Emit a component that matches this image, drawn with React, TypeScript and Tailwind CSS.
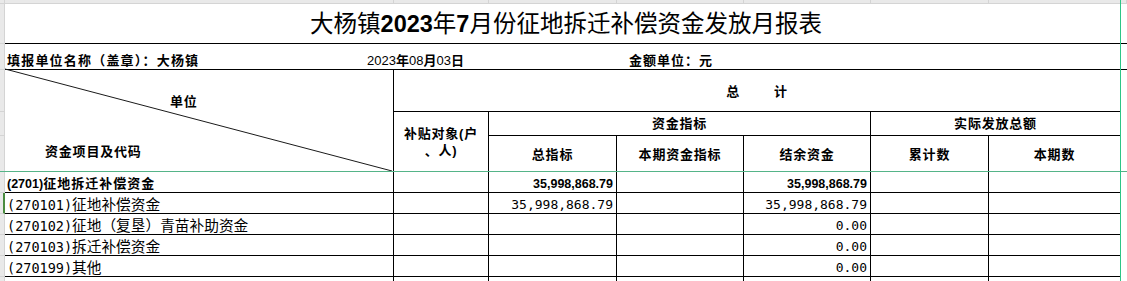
import React from "react";

const SANS = "font-['Liberation_Sans','Noto_Sans_CJK_SC',sans-serif]";
const MONO = "font-['DejaVu_Sans_Mono','Noto_Sans_CJK_SC',monospace]";
const CJK = "font-['Noto_Sans_CJK_SC',sans-serif]";
const BOLD = `${SANS} font-bold text-[13px] tracking-[0.8px] text-black`;
const HEAD = `${BOLD} leading-none`;

const STRIP = "bg-[#e9e9e9] border-r border-b border-[#d4d4d4]";
const CELL = "border-r border-b border-black";

const ROW = ["row-start-7", "row-start-8", "row-start-9", "row-start-10", "row-start-11", "row-start-12"];
const STRIP_COLS = ["col-start-1", "col-start-2", "col-start-3", "col-start-4", "col-start-5", "col-start-6", "col-start-7", "col-start-8", "col-start-9"];
const LEFT_ROWS = ["row-start-2", "row-start-3", "row-start-4", "row-start-5", "row-start-6"];

const rows = [
  { code: "(2701)", name: "征地拆迁补偿资金", total: "35,998,868.79", balance: "35,998,868.79", bold: true },
  { code: "(270101)", name: "征地补偿资金", total: "35,998,868.79", balance: "35,998,868.79" },
  { code: "(270102)", name: "征地（复垦）青苗补助资金", total: "", balance: "0.00" },
  { code: "(270103)", name: "拆迁补偿资金", total: "", balance: "0.00" },
  { code: "(270199)", name: "其他", total: "", balance: "0.00" },
  { code: "", name: "", total: "", balance: "" },
];

function Label({ code, name, bold }: { code: string; name: string; bold?: boolean }) {
  if (bold) {
    return (
      <span className="leading-none">
        <span className={`${SANS} font-bold text-[12.5px]`}>{code}</span>
        <span className={`${CJK} font-bold text-[13px] tracking-[1px]`}>{name}</span>
      </span>
    );
  }
  return (
    <span className="leading-none">
      <span className={`${MONO} text-[13.5px]`}>{code}</span>
      <span className={`${CJK} text-[14.7px]`}>{name}</span>
    </span>
  );
}

function Amount({ value, bold }: { value: string; bold?: boolean }) {
  if (!value) return null;
  return bold ? (
    <span className={`${SANS} font-bold text-[12.5px] leading-none`}>{value}</span>
  ) : (
    <span className={`${MONO} text-[13px] leading-none`}>{value}</span>
  );
}

export default function App() {
  return (
    <div className="relative w-[1127px] h-[281px] overflow-hidden bg-white text-black">
      <div className="grid grid-cols-[5px_389px_95px_128px_127px_127px_118px_132px_6px] grid-rows-[4px_40px_26px_42px_24px_36px_21px_21px_21px_21px_21px_21px]">
        {/* column header strip */}
        {STRIP_COLS.map((c) => (
          <div key={c} className={`${c} row-start-1 ${STRIP}`} />
        ))}
        {/* row header strip */}
        {LEFT_ROWS.map((r) => (
          <div key={r} className={`col-start-1 ${r} ${STRIP}`} />
        ))}

        {/* title */}
        <div className="col-start-2 col-span-8 row-start-2 border-b border-black flex items-center justify-center">
          <span className={`${CJK} text-[23.5px] leading-none`}>
            大杨镇<span className={`${SANS} font-bold`}>2023</span>年<span className={`${SANS} font-bold`}>7</span>月份征地拆迁补偿资金发放月报表
          </span>
        </div>

        {/* unit / date line */}
        <div className="col-start-2 col-span-8 row-start-3 border-b border-black flex items-end pl-[2px] pb-[2px]">
          <span className={`${HEAD} w-[360px] tracking-[1.2px]`}>填报单位名称（盖章）：大杨镇</span>
          <span className={`${SANS} text-[13px] leading-none w-[262px]`}>
            2023<span className="font-bold">年</span>08<span className="font-bold">月</span>03<span className="font-bold">日</span>
          </span>
          <span className={`${HEAD} tracking-[1px]`}>金额单位：元</span>
        </div>

        {/* diagonal header */}
        <div className={`relative col-start-2 row-start-4 row-span-3 ${CELL} flex flex-col`}>
          <svg className="absolute left-0 top-0 overflow-visible" width="389" height="102">
            <line x1="0" y1="-1" x2="387" y2="101" stroke="#1a1a1a" strokeWidth="1" />
          </svg>
          <span className={`${HEAD} ml-[165px] mt-[25px]`}>单位</span>
          <span className={`${HEAD} ml-[40px] mt-[37px]`}>资金项目及代码</span>
        </div>

        <div className={`col-start-3 col-span-6 row-start-4 ${CELL} flex items-center justify-center gap-[34px] pt-[1px]`}>
          <span className={HEAD}>总</span>
          <span className={HEAD}>计</span>
        </div>

        <div className={`col-start-3 row-start-5 row-span-2 ${CELL} flex items-center justify-center text-center`}>
          <p className={`${BOLD} leading-[17px]`}>
            补贴对象(户
            <br />
            、人)
          </p>
        </div>
        <div className={`col-start-4 col-span-3 row-start-5 ${CELL} flex items-center justify-center`}>
          <span className={HEAD}>资金指标</span>
        </div>
        <div className={`col-start-7 col-span-2 row-start-5 ${CELL} flex items-center justify-center`}>
          <span className={HEAD}>实际发放总额</span>
        </div>

        {["总指标", "本期资金指标", "结余资金", "累计数", "本期数"].map((t, i) => (
          <div key={t} className={`${STRIP_COLS[i + 3]} row-start-6 ${CELL} flex items-center justify-center pt-[2px]`}>
            <span className={HEAD}>{t}</span>
          </div>
        ))}

        {/* data rows */}
        {rows.map((r, i) => (
          <React.Fragment key={i}>
            <div
              className={`col-start-1 ${ROW[i]} ${STRIP} ${i === 1 ? "border-r-2 border-r-[#4a8c3f]" : ""}`}
            />
            <div className={`col-start-2 ${ROW[i]} ${CELL} flex items-end pl-[2px] ${r.bold ? "pb-[2px]" : "pb-[1px]"}`}>
              <Label code={r.code} name={r.name} bold={r.bold} />
            </div>
            <div className={`col-start-3 ${ROW[i]} ${CELL}`} />
            <div className={`col-start-4 ${ROW[i]} ${CELL} flex items-end justify-end pr-[3px] pb-[2px]`}>
              <Amount value={r.total} bold={r.bold} />
            </div>
            <div className={`col-start-5 ${ROW[i]} ${CELL}`} />
            <div className={`col-start-6 ${ROW[i]} ${CELL} flex items-end justify-end pr-[3px] pb-[2px]`}>
              <Amount value={r.balance} bold={r.bold} />
            </div>
            <div className={`col-start-7 ${ROW[i]} ${CELL}`} />
            <div className={`col-start-8 ${ROW[i]} ${CELL}`} />
          </React.Fragment>
        ))}
      </div>

      {/* frozen-pane / page lines */}
      <div className="absolute left-0 right-0 top-[171px] h-px bg-[#55b488]" />
      <div className="absolute top-0 bottom-0 left-[1120px] w-px bg-[#2cc587]" />
    </div>
  );
}
